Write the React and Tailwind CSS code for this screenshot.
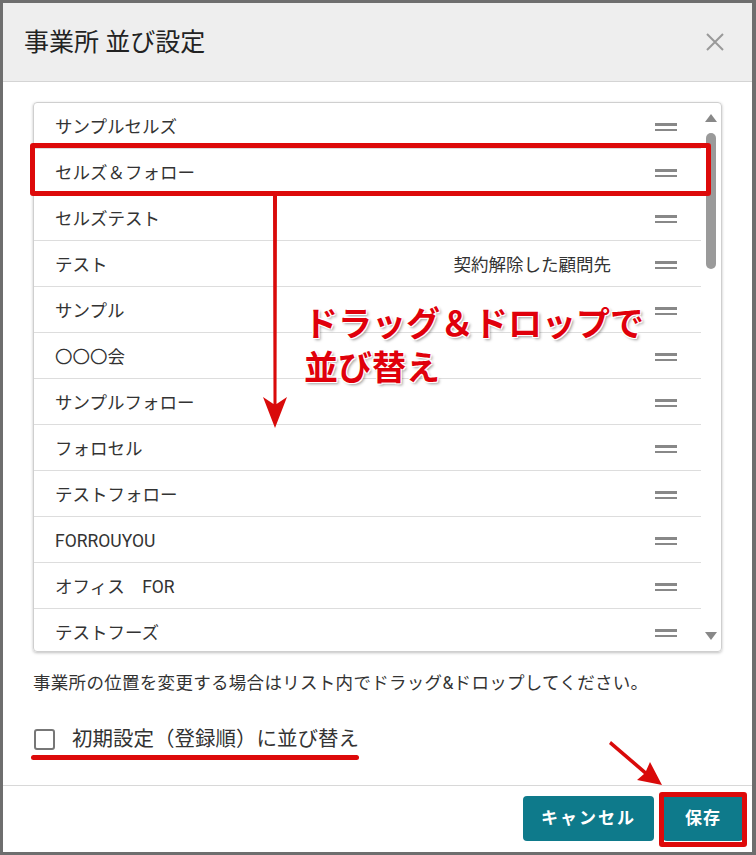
import React from 'react';

const offices = [
  { name: 'サンプルセルズ' },
  { name: 'セルズ＆フォロー' },
  { name: 'セルズテスト' },
  { name: 'テスト', note: '契約解除した顧問先' },
  { name: 'サンプル' },
  { name: '〇〇〇会' },
  { name: 'サンプルフォロー' },
  { name: 'フォロセル' },
  { name: 'テストフォロー' },
  { name: 'FORROUYOU' },
  { name: 'オフィス　FOR' },
  { name: 'テストフーズ' },
];

const font = { fontFamily: 'Roboto, "Noto Sans CJK JP", sans-serif' };

function DragHandle() {
  return (
    <div className="flex flex-col gap-[3px] w-[22px]">
      <span className="block h-[2.5px] bg-[#888]" />
      <span className="block h-[2.5px] bg-[#888]" />
    </div>
  );
}

function Scrollbar() {
  return (
    <div className="w-[20px] flex flex-col items-center pt-[11px] pb-[11px]">
      <svg width="12" height="8" viewBox="0 0 12 8"><path d="M6 0 L12 8 L0 8 Z" fill="#888" /></svg>
      <div className="mt-[11px] w-[10px] h-[136px] rounded-full bg-[#9a9a9a]" />
      <div className="flex-1" />
      <svg width="12" height="8" viewBox="0 0 12 8"><path d="M0 0 L12 0 L6 8 Z" fill="#888" /></svg>
    </div>
  );
}

export default function App() {
  return (
    <div className="relative w-[756px] h-[855px] bg-[#6e6e6e] p-[3px] overflow-hidden text-[#333]" style={font}>
      <div className="w-[749px] h-[849px] bg-white flex flex-col">
        <div className="h-[79px] bg-[#eeeeee] border-b border-[#d4d4d4] flex items-center justify-between pl-[21px] pr-[28px]">
          <h1 className="text-[25px] text-[#222] pt-[2px]">事業所 並び設定</h1>
          <svg width="18" height="18" viewBox="0 0 18 18" stroke="#999" strokeWidth="2">
            <path d="M1 1 L17 17 M17 1 L1 17" />
          </svg>
        </div>

        <div className="px-[30px] pt-[20px]">
          <div className="h-[550px] border border-[#cfcfcf] rounded-[4px] shadow-[0_1px_3px_rgba(0,0,0,0.25)] flex overflow-hidden">
            <ul className="flex-1">
              {offices.map((o, i) => (
                <li key={i} className="h-[46px] border-b border-[#dddddd] flex items-center pl-[21px] pr-[24px] pt-[3px] text-[17.5px]">
                  <span className="flex-1">{o.name}</span>
                  {o.note && <span className="mr-[44px]">{o.note}</span>}
                  <DragHandle />
                </li>
              ))}
            </ul>
            <Scrollbar />
          </div>

          <p className="mt-[18px] text-[17.5px] tracking-[0.3px] leading-[26px]">事業所の位置を変更する場合はリスト内でドラッグ&amp;ドロップしてください。</p>

          <label className="mt-[30px] flex items-center gap-[17px] pl-[1px]">
            <span className="w-[21px] h-[21px] border-2 border-[#777] rounded-[3px] bg-white" />
            <span className="text-[20.5px] leading-[26px]">初期設定（登録順）に並び替え</span>
          </label>
        </div>

        <div className="mt-auto border-t border-[#d8d8d8] h-[67px] flex items-start justify-end gap-[9px] pt-[10px] pr-[9px]">
          <button className="h-[45px] w-[131px] rounded-[4px] bg-[#0e7a8b] text-white font-bold text-[17px] tracking-[2px]">キャンセル</button>
          <button className="h-[45px] w-[80px] rounded-[4px] bg-[#0e7a8b] text-white font-bold text-[17px] tracking-[1px]">保存</button>
        </div>
      </div>

      {/* annotations */}
      <div className="absolute left-[30px] top-[143px] w-[681px] h-[53px] border-[5px] border-[#dd0a0a] rounded-[3px]" />
      <div className="absolute left-[659px] top-[792px] w-[88px] h-[55px] border-[5px] border-[#dd0a0a] rounded-[3px]" />
      <div className="absolute left-[31px] top-[755px] w-[328px] h-[5px] rounded-full bg-[#dd0a0a]" />

      <svg className="absolute left-[260px] top-[194px]" width="30" height="240" viewBox="0 0 30 240">
        <path d="M13 2 L17 2 L16.5 210 L27 203 L15 234 L3 203 L13.5 210 Z" fill="#d90a0a" />
      </svg>
      <svg className="absolute left-[605px] top-[735px]" width="62" height="55" viewBox="0 0 62 55">
        <path d="M6 6 L41 36 L45 27 L57 50 L32 45 L39 39 L4 9 Z" fill="#d90a0a" />
      </svg>

      <div className="absolute left-[304px] top-[302px] text-[34px] leading-[44px] font-bold text-[#e0000b] [text-shadow:0_0_2px_#fff,1px_1px_0_#fff,-1px_-1px_0_#fff,1px_-1px_0_#fff,-1px_1px_0_#fff,2px_2px_3px_rgba(0,0,0,0.4)]">
        <div>ドラッグ＆ドロップで</div>
        <div>並び替え</div>
      </div>
    </div>
  );
}
